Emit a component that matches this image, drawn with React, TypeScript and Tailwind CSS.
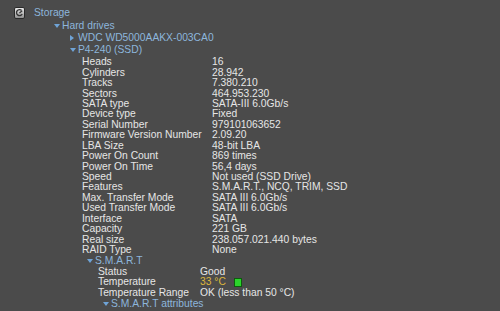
import React from "react";

const FONT = { fontFamily: '"Liberation Sans", Arial, sans-serif' };

function Tri({ open }: { open: boolean }) {
  return open ? (
    <svg width="6" height="4" viewBox="0 0 6 4" className="shrink-0">
      <path d="M0 0 L6 0 L3 4 Z" fill="#6fa3d6" />
    </svg>
  ) : (
    <svg width="4" height="6" viewBox="0 0 4 6" className="shrink-0">
      <path d="M0 0 L4 3 L0 6 Z" fill="#6fa3d6" />
    </svg>
  );
}

function Node({ indent, open, label }: { indent: string; open: boolean; label: string }) {
  return (
    <div className={`flex items-center h-[12px] ${indent}`}>
      <span className="w-[8px] flex items-center">
        <Tri open={open} />
      </span>
      <span className="text-[#8db6dc]">{label}</span>
    </div>
  );
}

function Row({ label, value, indent, col, accent }: { label: string; value: React.ReactNode; indent: string; col: string; accent?: string }) {
  return (
    <div className={`flex items-center h-[10.45px] ${indent}`}>
      <span className={`${col} shrink-0`}>{label}</span>
      <span className={accent ?? "text-[#e6e6e6]"}>{value}</span>
    </div>
  );
}

const DRIVE: [string, string][] = [
  ["Heads", "16"],
  ["Cylinders", "28.942"],
  ["Tracks", "7.380.210"],
  ["Sectors", "464.953.230"],
  ["SATA type", "SATA-III 6.0Gb/s"],
  ["Device type", "Fixed"],
  ["Serial Number", "979101063652"],
  ["Firmware Version Number", "2.09.20"],
  ["LBA Size", "48-bit LBA"],
  ["Power On Count", "869 times"],
  ["Power On Time", "56,4 days"],
  ["Speed", "Not used (SSD Drive)"],
  ["Features", "S.M.A.R.T., NCQ, TRIM, SSD"],
  ["Max. Transfer Mode", "SATA III 6.0Gb/s"],
  ["Used Transfer Mode", "SATA III 6.0Gb/s"],
  ["Interface", "SATA"],
  ["Capacity", "221 GB"],
  ["Real size", "238.057.021.440 bytes"],
  ["RAID Type", "None"],
];

function StorageIcon() {
  return (
    <svg width="11" height="12" viewBox="0 0 11 12" className="shrink-0">
      <defs>
        <linearGradient id="g" x1="0" y1="0" x2="0" y2="1">
          <stop offset="0" stopColor="#ececec" />
          <stop offset="1" stopColor="#8e8e8e" />
        </linearGradient>
      </defs>
      <rect x="0.5" y="0.5" width="10" height="11" rx="1.5" fill="url(#g)" stroke="#2a2a2a" />
      <path d="M7.6 3.4 A3 3 0 1 0 8.2 7" fill="none" stroke="#333" strokeWidth="1.3" />
      <path d="M5.4 6 L8.2 3.8" stroke="#333" strokeWidth="1.1" />
    </svg>
  );
}

export default function App() {
  return (
    <div className="w-[500px] h-[311px] bg-[#4b4b4b] overflow-hidden text-[10.3px] leading-[10px] text-[#e6e6e6] pt-[7px]" style={FONT}>
      <div className="flex items-center h-[12px] pl-[14px] gap-[9px]">
        <StorageIcon />
        <span className="text-[#8db6dc]">Storage</span>
      </div>
      <Node indent="pl-[54px] mt-px" open label="Hard drives" />
      <Node indent="pl-[70px]" open={false} label="WDC WD5000AAKX-003CA0" />
      <Node indent="pl-[70px]" open label="P4-240 (SSD)" />
      <div className="mt-[1px]">
        {DRIVE.map(([l, v]) => (
          <Row key={l} label={l} value={v} indent="pl-[82px]" col="w-[130px]" />
        ))}
      </div>
      <div className="flex items-center h-[11.5px] pl-[87px]">
        <span className="w-[8px] flex items-center">
          <Tri open />
        </span>
        <span className="text-[#8db6dc]">S.M.A.R.T</span>
      </div>
      <Row label="Status" value="Good" indent="pl-[98px]" col="w-[102px]" />
      <Row
        label="Temperature"
        indent="pl-[98px]"
        col="w-[102px]"
        accent="text-[#dcb63c] flex items-center"
        value={
          <>
            33 °C
            <span className="ml-[8px] w-[8px] h-[9px] bg-[#2bd42b] border border-[#0d5c0d]" />
          </>
        }
      />
      <Row label="Temperature Range" value="OK (less than 50 °C)" indent="pl-[98px]" col="w-[102px]" />
      <div className="flex items-center h-[11px] pl-[103px]">
        <span className="w-[8px] flex items-center">
          <Tri open />
        </span>
        <span className="text-[#8db6dc]">S.M.A.R.T attributes</span>
      </div>
    </div>
  );
}
